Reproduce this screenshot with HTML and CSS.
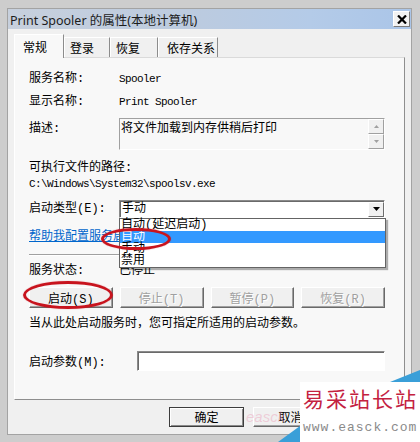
FILE: index.html
```html
<!DOCTYPE html>
<html lang="zh-CN">
<head>
  <meta charset="UTF-8" />
  <title>Print Spooler 的属性(本地计算机)</title>
  <link rel="stylesheet" href="styles.css">
</head>
<body>
  <div class="window">
    <div class="titlebar">
      <span class="title">Print Spooler 的属性(本地计算机)</span>
      <span class="close">
        <svg width="10" height="9" viewBox="0 0 10 9"><path d="M1 0.5 L9 8.5 M9 0.5 L1 8.5" stroke="#000" stroke-width="2.2"/></svg>
      </span>
    </div>

    <div class="content">
      <div class="tabs">
        <span class="tab active">常规</span>
        <span class="tab t-logon">登录</span>
        <span class="tab t-recover">恢复</span>
        <span class="tab t-deps">依存关系</span>
      </div>

      <div class="panel">
        <div class="row r-first"><span>服务名称:</span><span class="mono">Spooler</span></div>
        <div class="row"><span>显示名称:</span><span class="mono">Print Spooler</span></div>

        <div class="row r-desc">
          <span class="desc-label">描述:</span>
          <div class="desc-box">
            <span class="desc-text">将文件加载到内存供稍后打印</span>
            <div class="spin">
              <span class="spin-btn"><svg width="5" height="3" viewBox="0 0 5 3"><path d="M0 3 L2.5 0 L5 3 Z" fill="#a0a0a0"/></svg></span>
              <span class="spin-btn"><svg width="5" height="3" viewBox="0 0 5 3"><path d="M0 0 L2.5 3 L5 0 Z" fill="#a0a0a0"/></svg></span>
            </div>
          </div>
        </div>

        <div class="path-label">可执行文件的路径:</div>
        <div class="mono path">C:\Windows\System32\spoolsv.exe</div>

        <div class="row r-type">
          <span>启动类型(E):</span>
          <div class="combo">
            <span class="combo-text">手动</span>
            <span class="combo-btn"><svg width="7" height="4" viewBox="0 0 7 4"><path d="M0 0 L7 0 L3.5 4 Z" fill="#000"/></svg></span>
            <ul class="droplist">
              <li>自动(延迟启动)</li>
              <li class="selected">自动</li>
              <li>手动</li>
              <li>禁用</li>
            </ul>
          </div>
        </div>

        <a class="help" href="#">帮助我配置服务启动选项。</a>
        <div class="sep"></div>

        <div class="row r-status"><span>服务状态:</span><span>已停止</span></div>

        <div class="svc-buttons">
          <button class="btn">启动(S)</button>
          <button class="btn" disabled>停止(T)</button>
          <button class="btn" disabled>暂停(P)</button>
          <button class="btn" disabled>恢复(R)</button>
        </div>

        <p class="note">当从此处启动服务时，您可指定所适用的启动参数。</p>

        <div class="param-row">
          <label class="param-label">启动参数(M):</label>
          <input class="param-input" type="text">
        </div>
      </div>

      <div class="footer">
        <button class="btn default">确定</button>
        <button class="btn">取消</button>
        <button class="btn">应用(A)</button>
      </div>
    </div>
  </div>

  <!-- red annotation rings drawn over the dialog -->
  <div class="ring ring-start"></div>
  <div class="ring ring-auto"></div>

  <span class="ghost">easck</span>

  <div class="watermark">
    <svg class="wm-bg" width="142" height="72" viewBox="0 0 142 72">
      <rect x="22" y="12" width="120" height="60" fill="#fff"/>
      <path d="M112 12 L142 0 L142 12 Z" fill="#3a9fd8"/>
      <path d="M0 72 L22 56 L22 72 Z" fill="#3a9fd8"/>
    </svg>
    <div class="wm-text">
      <div class="wm-name">易采站长站</div>
      <div class="wm-url">www.easck.com</div>
    </div>
  </div>
</body>
</html>
```

FILE: styles.css
```css
body {
  margin: 0;
  width: 420px;
  height: 442px;
  overflow: hidden;
  background-color: #cdcdcd;
  font-family: "Liberation Mono", "Noto Sans CJK SC", monospace;
  font-size: 12px;
  color: #000;
}

.window {
  margin: 8px 0 0 7px;
  width: 405px;
  height: 427px;
  box-sizing: border-box;
  border: 1px solid #a3a3a3;
  background-color: #f0f0f0;
}

.titlebar {
  height: 20px;
  display: flex;
  align-items: center;
  justify-content: space-between;
  padding: 0 1px 0 2px;
  background: linear-gradient(to right, #c7d0dd 0%, #bccbdf 45%, #b4cbe8 75%, #aac5e8 100%);
}

.title {
  font-family: "Noto Sans", "Noto Sans CJK SC", sans-serif;
  font-size: 12.5px;
  color: #1c1c1c;
}

.close {
  width: 17px;
  height: 16px;
  box-sizing: border-box;
  border: 1px solid;
  border-color: #fff #7a7a7a #7a7a7a #fff;
  background-color: #f2f2f2;
  display: flex;
  align-items: center;
  justify-content: center;
}

.content {
  padding: 5px 6px 0;
}

/* tabs */
.tabs {
  display: flex;
  align-items: flex-end;
  height: 23px;
}

.tab {
  height: 20px;
  line-height: 19px;
  box-sizing: border-box;
  border-top: 1px solid #fff;
  border-left: 1px solid #fff;
  border-right: 1px solid #8c8c8c;
  padding-left: 5px;
  font-family: "Noto Sans CJK SC", sans-serif;
}

.tab.active {
  width: 50px;
  height: 24px;
  line-height: 24px;
  margin-bottom: -1px;
  padding-left: 8px;
  background-color: #f8f8f8;
  position: relative;
}

.t-logon { width: 46px; }
.t-recover { width: 48px; }
.t-deps { width: 60px; padding-left: 8px; }

.panel {
  height: 343px;
  box-sizing: border-box;
  border: 1px solid;
  border-color: #dadada #8e8e8e #8e8e8e #fff;
  background-color: #f8f8f8;
  padding: 9px 19px 0 14px;
}

.row {
  display: grid;
  grid-template-columns: 90px 1fr;
  align-items: center;
  height: 23px;
  line-height: 16px;
}

.mono {
  font-size: 11px;
  letter-spacing: -0.6px;
}

.r-desc {
  height: auto;
  align-items: start;
  margin-top: 5px;
}

.desc-label {
  padding-top: 3px;
}

.desc-box {
  height: 32px;
  box-sizing: border-box;
  border: 1px solid;
  border-color: #a0a0a0 #fff #fff #a0a0a0;
  display: flex;
}

.desc-text {
  flex: 1;
  padding: 0 0 0 1px;
  line-height: 15px;
  font-family: "Noto Sans CJK SC", sans-serif;
}

.spin {
  display: flex;
  flex-direction: column;
  width: 16px;
}

.spin-btn {
  height: 15px;
  box-sizing: border-box;
  border: 1px solid;
  border-color: #fff #a0a0a0 #a0a0a0 #fff;
  background-color: #f0f0f0;
  display: flex;
  align-items: center;
  justify-content: center;
}

.path-label {
  margin-top: 10px;
  line-height: 16px;
}

.path {
  line-height: 16px;
}

.r-type {
  margin-top: 8px;
  height: 18px;
}

.combo {
  height: 18px;
  box-sizing: border-box;
  border: 1px solid;
  border-color: #8a8a8a #fff #fff #8a8a8a;
  box-shadow: inset 1px 1px 0 #6a6a6a;
  background-color: #fff;
  display: flex;
  align-items: center;
  position: relative;
}

.combo-text {
  flex: 1;
  padding-left: 2px;
  line-height: 16px;
}

.combo-btn {
  width: 16px;
  height: 15px;
  box-sizing: border-box;
  border: 1px solid;
  border-color: #fff #6e6e6e #6e6e6e #fff;
  background-color: #f0f0f0;
  display: flex;
  align-items: center;
  justify-content: center;
}

.droplist {
  list-style: none;
  margin: 0;
  padding: 0;
  position: absolute;
  top: 17px;
  left: -1px;
  width: 267px;
  box-sizing: border-box;
  border: 1px solid #646464;
  background-color: #fff;
  box-shadow: 2px 2px 1px rgba(0, 0, 0, 0.3);
  z-index: 2;
}

.droplist li {
  height: 12px;
  line-height: 12px;
  padding-left: 1px;
}

.droplist li.selected {
  background-color: #3399ff;
  color: #fff;
}

.help {
  display: block;
  width: fit-content;
  margin-top: 11px;
  line-height: 16px;
  color: #0066cc;
  text-decoration: underline;
}

.sep {
  margin-top: 9px;
  border-top: 1px solid #a0a0a0;
  border-bottom: 1px solid #fff;
}

.r-status {
  margin-top: 7px;
  height: 16px;
}

.svc-buttons {
  display: grid;
  grid-template-columns: repeat(4, 1fr);
  gap: 7px;
  margin-top: 8px;
}

.btn {
  height: 21px;
  padding: 0;
  font: inherit;
  color: #000;
  background-color: #f0f0f0;
  border: 1px solid;
  border-color: #fff #696969 #696969 #fff;
  box-shadow: inset -1px -1px 0 #a0a0a0;
}

.btn:disabled {
  color: #a0a0a0;
  text-shadow: 1px 1px 0 #fff;
}

.btn.default {
  border-color: #3c3c3c;
  box-shadow: inset 1px 1px 0 #fff, inset -1px -1px 0 #8a8a8a;
}

.note {
  margin: 8px 0 0;
  line-height: 16px;
}

.param-row {
  display: flex;
  align-items: center;
  margin-top: 19px;
}

.param-label {
  width: 108px;
}

.param-input {
  flex: 1;
  height: 20px;
  box-sizing: border-box;
  border: 1px solid;
  border-color: #8a8a8a #fff #fff #8a8a8a;
  box-shadow: inset 1px 1px 0 #6a6a6a;
  background-color: #fff;
  margin: 0;
}

.footer {
  display: flex;
  gap: 9px;
  margin-top: 7px;
  padding-left: 155px;
}

.footer .btn {
  width: 75px;
  height: 20px;
  flex: none;
}

/* annotations over the screenshot */
.ring {
  position: absolute;
  z-index: 3;
  box-sizing: border-box;
  border: 3px solid #c8141e;
  border-radius: 50%;
  box-shadow: 0 0 1px rgba(200, 20, 30, 0.6);
}

.ring-start {
  left: 23px;
  top: 281px;
  width: 90px;
  height: 28px;
}

.ring-auto {
  left: 101px;
  top: 228px;
  width: 70px;
  height: 22px;
}

.ghost {
  position: absolute;
  left: 246px;
  top: 408px;
  font-family: "Liberation Sans", sans-serif;
  font-size: 15px;
  font-style: italic;
  color: rgba(235, 160, 185, 0.45);
}

.watermark {
  position: absolute;
  z-index: 4;
  left: 278px;
  top: 370px;
  width: 142px;
  height: 72px;
}

.wm-bg {
  position: absolute;
  left: 0;
  top: 0;
}

.wm-text {
  position: relative;
  padding: 16px 0 0 25px;
}

.wm-name {
  font-family: "Noto Sans CJK SC", sans-serif;
  font-size: 21px;
  line-height: 24px;
  letter-spacing: 2px;
  color: #c4213f;
}

.wm-url {
  margin-top: 11px;
  font-family: "Liberation Mono", monospace;
  font-size: 13px;
  line-height: 14px;
  letter-spacing: 1px;
  color: #8a8a8a;
}
```
